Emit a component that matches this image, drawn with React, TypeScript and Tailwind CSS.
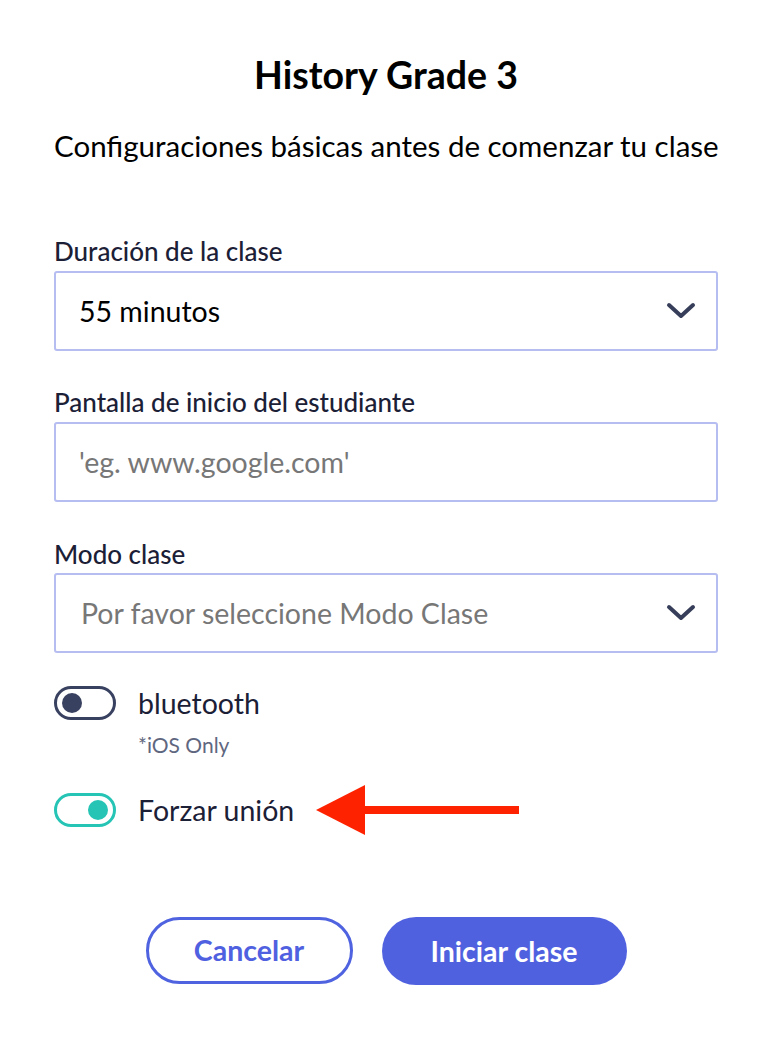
import React from "react";

function Chevron() {
  return (
    <svg width="30" height="20" viewBox="0 0 30 20" fill="none" aria-hidden>
      <path d="M3 4 L15 15 L27 4" stroke="#363e5a" strokeWidth="4" strokeLinecap="round" strokeLinejoin="round" />
    </svg>
  );
}

function Toggle({ on }: { on: boolean }) {
  return (
    <div
      className={
        on
          ? "flex h-[34px] w-[62px] shrink-0 items-center justify-end rounded-full border-[3px] border-[#25c4b5] px-[5px]"
          : "flex h-[34px] w-[62px] shrink-0 items-center justify-start rounded-full border-[3px] border-[#394160] px-[5px]"
      }
    >
      <span className={on ? "h-[20px] w-[20px] rounded-full bg-[#25c4b5]" : "h-[20px] w-[20px] rounded-full bg-[#394160]"} />
    </div>
  );
}

function RedArrow() {
  return (
    <svg width="203" height="52" viewBox="0 0 203 52" aria-hidden>
      <polygon points="0,26 49,1 49,51" fill="#ff2200" />
      <rect x="48" y="22" width="155" height="8" fill="#ff2200" />
    </svg>
  );
}

export default function App() {
  return (
    <div
      className="min-h-[1040px] w-[776px] bg-white text-[#1b2036]"
      style={{ fontFamily: 'Lato, "Open Sans", sans-serif' }}
    >
      <div className="flex flex-col pl-[54px] pr-[58px] pt-[52px]">
        <h1 className="text-center text-[37.5px] font-bold leading-[46px] text-black">History Grade 3</h1>
        <p className="mt-[30px] whitespace-nowrap text-center text-[29.5px] leading-[36px] text-black">
          Configuraciones básicas antes de comenzar tu clase
        </p>

        <label className="mt-[71px] text-[26px] font-medium leading-[32px]">Duración de la clase</label>
        <div className="mt-[4px] flex h-[80px] items-center justify-between rounded-[3px] border-2 border-[#b6bdf1] pl-[23px] pr-[20px]">
          <span className="text-[28.5px] text-black">55 minutos</span>
          <Chevron />
        </div>

        <label className="mt-[35px] text-[26px] font-medium leading-[32px]">Pantalla de inicio del estudiante</label>
        <div className="mt-[4px] flex h-[80px] items-center rounded-[3px] border-2 border-[#b6bdf1] pl-[23px] pr-[20px]">
          <span className="text-[28.5px] text-[#777777]">'eg. www.google.com'</span>
        </div>

        <label className="mt-[36px] text-[26px] font-medium leading-[32px]">Modo clase</label>
        <div className="mt-[3px] flex h-[80px] items-center justify-between rounded-[3px] border-2 border-[#b6bdf1] pl-[25px] pr-[20px]">
          <span className="text-[28.5px] text-[#777777]">Por favor seleccione Modo Clase</span>
          <Chevron />
        </div>

        <div className="mt-[33px] flex items-center gap-[22px]">
          <Toggle on={false} />
          <span className="text-[28.5px] leading-[34px]">bluetooth</span>
        </div>
        <span className="ml-[84px] mt-[12px] text-[21px] leading-[26px] text-[#5f6780]">*iOS Only</span>

        <div className="mt-[26px] flex items-center gap-[22px]">
          <Toggle on={true} />
          <span className="text-[28.5px] leading-[34px]">Forzar unión</span>
          <RedArrow />
        </div>

        <div className="mt-[81px] flex justify-center gap-[29px]">
          <button className="h-[67px] w-[207px] rounded-full border-[3px] border-[#4f63e0] text-[28.5px] font-bold text-[#4f60e0]">
            Cancelar
          </button>
          <button className="h-[68px] w-[245px] rounded-full bg-[#5061e0] text-[28.5px] font-bold text-white">
            Iniciar clase
          </button>
        </div>
      </div>
    </div>
  );
}
